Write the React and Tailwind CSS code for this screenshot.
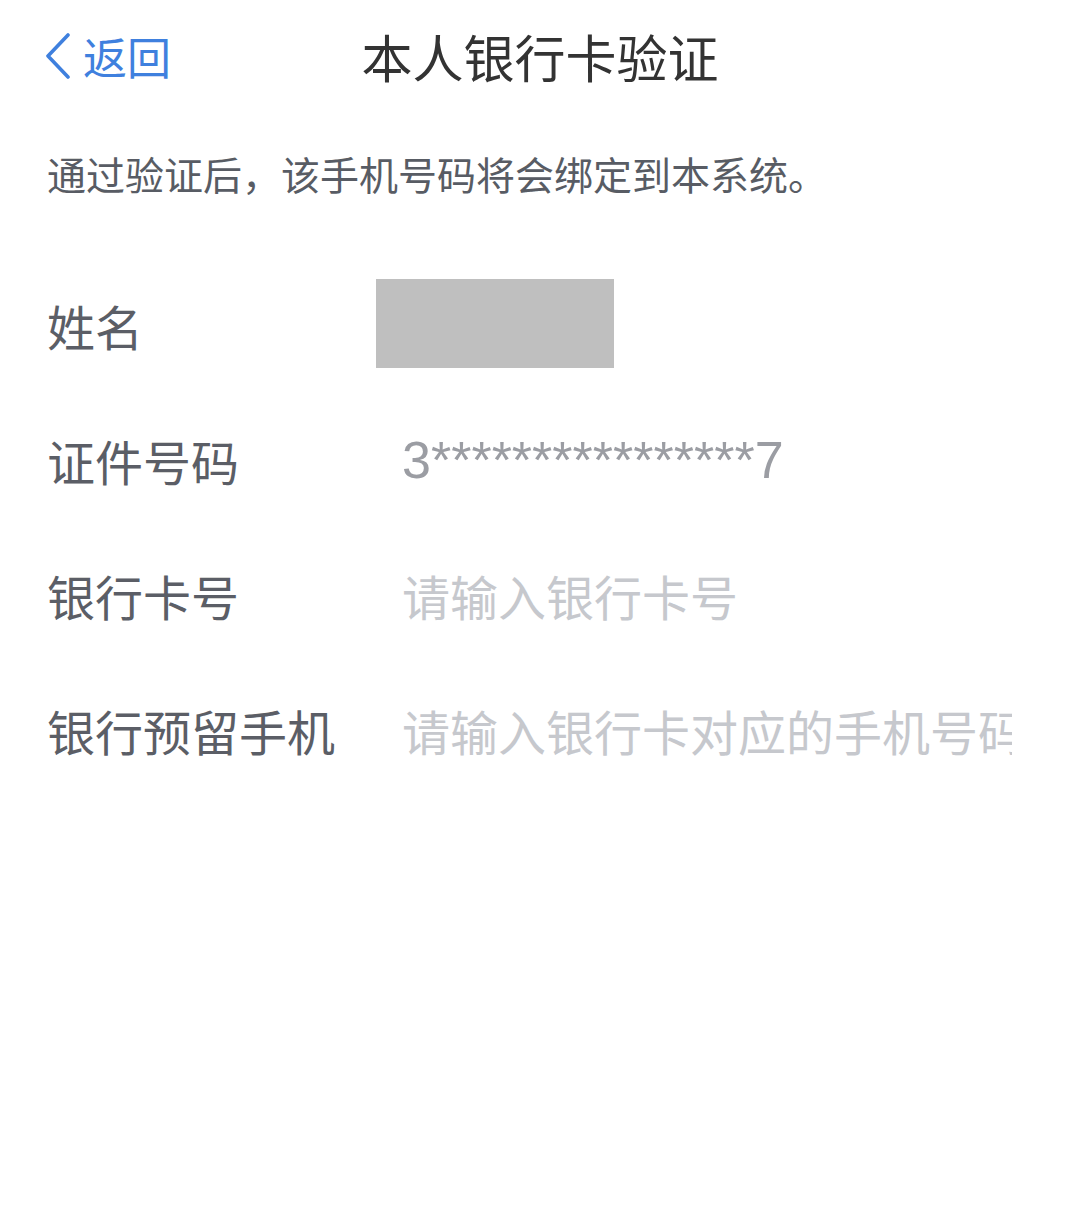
const cjk = { fontFamily: '"Noto Sans CJK SC", "Noto Sans", sans-serif' };

function Row({ label, children }) {
  return (
    <div className="flex h-[135px] items-center">
      <div className="w-[329px] shrink-0 text-[48px] leading-none text-[#5b5e66]">{label}</div>
      <div className="flex-1 flex items-center">{children}</div>
    </div>
  );
}

export default function App() {
  return (
    <div className="min-h-[1221px] w-[1080px] bg-white" style={cjk}>
      <header className="grid h-[112px] grid-cols-[1fr_auto_1fr] items-center px-[45px]">
        <button className="flex items-center gap-[12px] text-[#3f80de]">
          <svg width="26" height="46" viewBox="0 0 26 46" fill="none">
            <path d="M23 2 L3 23 L23 44" stroke="currentColor" strokeWidth="3.6" strokeLinecap="round" strokeLinejoin="round" />
          </svg>
          <span className="text-[44px] leading-none">返回</span>
        </button>
        <h1 className="text-[51px] leading-none font-normal text-[#333333]">本人银行卡验证</h1>
        <div />
      </header>

      <p className="flex h-[122px] items-center pl-[47px] text-[39px] leading-none text-[#585c64]">
        通过验证后，该手机号码将会绑定到本系统。
      </p>

      <div className="pt-[23px] pl-[47px]">
        <Row label="姓名">
          <div className="mt-[-3px] h-[89px] w-[238px] bg-[#bfbfbf]" />
        </Row>
        <Row label="证件号码">
          <div
            className="pl-[26px] text-[52px] leading-none text-[#9b9da3]"
            style={{ fontFamily: '"Liberation Sans", Arial, sans-serif' }}
          >
            3****************7
          </div>
        </Row>
        <Row label="银行卡号">
          <input
            className="w-[636px] bg-transparent pl-[26px] text-[48px] leading-none outline-none placeholder:text-[#c6c8cd]"
            placeholder="请输入银行卡号"
          />
        </Row>
        <Row label="银行预留手机">
          <input
            className="w-[636px] bg-transparent pl-[26px] text-[48px] leading-none outline-none placeholder:text-[#c6c8cd]"
            placeholder="请输入银行卡对应的手机号码"
          />
        </Row>
      </div>
    </div>
  );
}
